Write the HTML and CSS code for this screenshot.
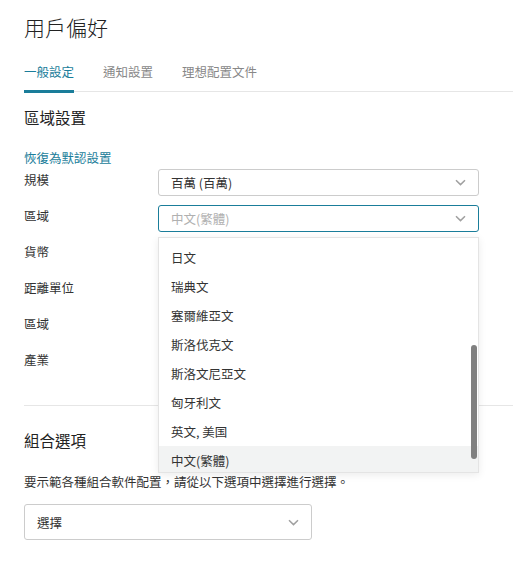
FILE: index.html
```html
<!DOCTYPE html>
<html lang="zh-Hant">
<head>
    <meta charset="UTF-8">
    <meta name="viewport" content="width=device-width, initial-scale=1.0">
    <title>用戶偏好</title>
    <link rel="stylesheet" href="styles.css">
</head>
<body>

    <div class="page">
        <h1 class="page-title">用戶偏好</h1>

        <div class="tabs">
            <div class="tab active">一般設定</div>
            <div class="tab">通知設置</div>
            <div class="tab">理想配置文件</div>
        </div>

        <h2 class="section-title">區域設置</h2>
        <a class="reset-link" href="#">恢復為默認設置</a>

        <div class="form-grid">
            <div class="form-label">規模</div>
            <div class="select">
                <span>百萬 (百萬)</span>
                <svg class="chevron" width="11" height="7" viewBox="0 0 11 7"><polyline points="1,1.2 5.5,5.6 10,1.2" fill="none" stroke="#a0a0a0" stroke-width="1.5"/></svg>
            </div>

            <div class="form-label">區域</div>
            <div class="select-wrap">
                <div class="select focused">
                    <span class="placeholder">中文(繁體)</span>
                    <svg class="chevron" width="11" height="7" viewBox="0 0 11 7"><polyline points="1,1.2 5.5,5.6 10,1.2" fill="none" stroke="#a0a0a0" stroke-width="1.5"/></svg>
                </div>

                <!-- Open options list -->
                <div class="dropdown">
                    <div class="option">日文</div>
                    <div class="option">瑞典文</div>
                    <div class="option">塞爾維亞文</div>
                    <div class="option">斯洛伐克文</div>
                    <div class="option">斯洛文尼亞文</div>
                    <div class="option">匈牙利文</div>
                    <div class="option">英文, 美国</div>
                    <div class="option selected">中文(繁體)</div>
                    <div class="scroll-thumb"></div>
                </div>
            </div>

            <div class="form-label">貨幣</div>
            <div></div>
            <div class="form-label">距離單位</div>
            <div></div>
            <div class="form-label">區域</div>
            <div></div>
            <div class="form-label">產業</div>
            <div></div>
        </div>

        <hr class="divider">

        <h2 class="section-title combo-title">組合選項</h2>
        <p class="hint">要示範各種組合軟件配置，請從以下選項中選擇進行選擇。</p>

        <div class="select large">
            <span>選擇</span>
            <svg class="chevron" width="11" height="7" viewBox="0 0 11 7"><polyline points="1,1.2 5.5,5.6 10,1.2" fill="none" stroke="#a0a0a0" stroke-width="1.5"/></svg>
        </div>
    </div>

</body>
</html>
```

FILE: styles.css
```css
* {
    box-sizing: border-box;
    margin: 0;
    padding: 0;
}

body {
    font-family: "Noto Sans CJK TC", "Noto Sans", sans-serif;
    background: #ffffff;
    color: #333333;
    font-size: 13px;
    overflow: hidden;
}

.page {
    padding: 12px 0 0 24px;
}

.page-title {
    font-size: 21px;
    font-weight: 300;
    line-height: 30px;
    color: #222;
}

/* Tabs */
.tabs {
    display: flex;
    gap: 29px;
    margin-top: 20px;
    border-bottom: 1px solid #e6e6e6;
}

.tab {
    font-size: 12.5px;
    line-height: 20px;
    padding-bottom: 8px;
    color: #888;
    border-bottom: 3px solid transparent;
    margin-bottom: -2px;
}

.tab.active {
    color: #1a7d9a;
    border-bottom-color: #1a7d9a;
}

.section-title {
    font-size: 15.5px;
    font-weight: 400;
    line-height: 22px;
    margin-top: 14px;
    color: #222;
}

.reset-link {
    display: block;
    margin-top: 22px;
    color: #1a7d9a;
    text-decoration: none;
    font-size: 12.5px;
    line-height: 16px;
}

/* Labels and fields */
.form-grid {
    display: grid;
    grid-template-columns: 134px 321px;
    grid-auto-rows: 36px;
    margin-top: 3px;
}

.form-label {
    font-size: 12.5px;
    line-height: 16px;
    padding-top: 3px;
}

.select-wrap {
    position: relative;
}

.select {
    height: 27px;
    border: 1px solid #cccccc;
    border-radius: 3px;
    display: flex;
    align-items: center;
    justify-content: space-between;
    padding: 0 12px 0 12px;
    font-size: 12.5px;
    background: #fff;
}

.select.focused {
    border-color: #1a7d9a;
}

.placeholder {
    color: #b0b0b0;
}

.chevron {
    display: block;
}

.dropdown {
    position: absolute;
    top: 32px;
    left: 0;
    width: 321px;
    height: 236px;
    overflow: hidden;
    background: #fff;
    border: 1px solid #e4e4e4;
    box-shadow: 0 2px 8px rgba(0, 0, 0, 0.08);
    padding-top: 5px;
    z-index: 2;
}

.option {
    height: 29px;
    line-height: 29px;
    padding-left: 12px;
    font-size: 12.5px;
}

.option.selected {
    background: #f2f3f3;
}

.scroll-thumb {
    position: absolute;
    right: 1px;
    top: 107px;
    width: 6px;
    height: 114px;
    border-radius: 3px;
    background: #808080;
}

.divider {
    border: none;
    border-top: 1px solid #e6e6e6;
    margin-top: 20px;
}

.combo-title {
    margin-top: 23px;
}

.hint {
    margin-top: 23px;
    font-size: 12.5px;
    line-height: 16px;
}

.select.large {
    width: 288px;
    height: 36px;
    margin-top: 14px;
}
```
